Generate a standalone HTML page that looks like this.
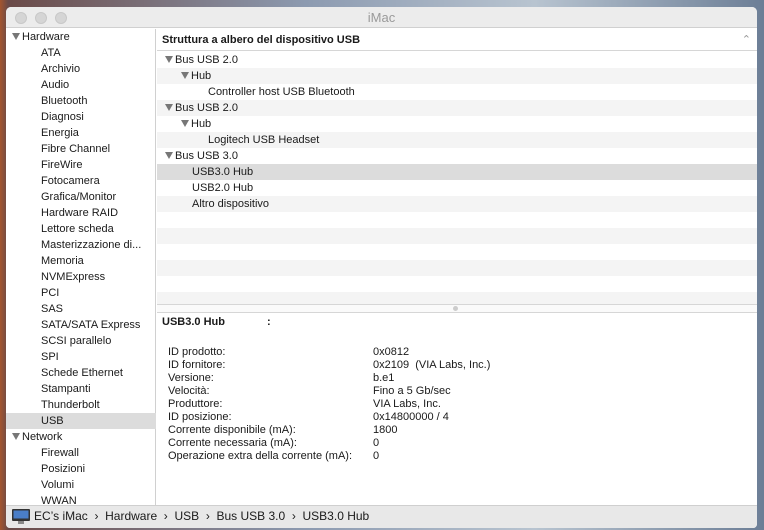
<!DOCTYPE html>
<html><head><meta charset="utf-8"><style>
*{margin:0;padding:0;box-sizing:border-box}
body{width:764px;height:530px;overflow:hidden;font-family:"Liberation Sans",sans-serif;font-size:11px;color:#1a1a1a;background:linear-gradient(90deg,#a4552e 0,#6a4a48 8px,#8c9ab0 40%,#b8c4d0 70%,#6c7e96 100%);position:relative}
.win{position:absolute;left:6px;top:7px;width:751px;height:521px;background:#fff;border-radius:5px 5px 4px 4px;overflow:hidden}
.title{height:21px;background:#ececec;border-bottom:1px solid #d0d0d0;text-align:center;line-height:21px;font-size:13px;color:#9a9a9a;position:relative}
.dot{position:absolute;top:5px;width:12px;height:12px;border-radius:50%;background:#d5d5d5;border:1px solid #c8c8c8}
.side{position:absolute;left:0;top:22px;width:150px;height:476px;background:#fff;border-right:1px solid #d0d0d0}
.r{position:absolute;left:0;width:150px;height:16px;line-height:17px;font-size:11px}
.tri{display:inline-block;width:0;height:0;border-left:4px solid transparent;border-right:4px solid transparent;border-top:7px solid #777;margin-right:2px;vertical-align:0px}
.main{position:absolute;left:151px;top:22px;width:600px;height:476px}
.hdr{height:22px;border-bottom:1px solid #d6d6d6;line-height:22px;padding-left:5px;font-weight:bold;font-size:11px;background:#fff;position:relative}
.tr{position:absolute;left:0;width:600px;height:16px;line-height:16px}
.g{background:#f4f4f4}
.sel{background:#dcdcdc}
.split{position:absolute;left:0;top:275px;width:600px;height:9px;border-top:1px solid #d6d6d6;border-bottom:1px solid #d6d6d6;background:#fafafa}
.det{position:absolute;top:284px;left:0;width:600px}
.k{position:absolute;left:11px}
.v{position:absolute;left:216px}
.status{position:absolute;left:0;top:498px;width:751px;height:23px;background:#e8e8e8;border-top:1px solid #cfcfcf;line-height:20px;font-size:12px;padding-left:28px}
</style></head><body>
<div class="win">
<div class="title"><span class="dot" style="left:9px"></span><span class="dot" style="left:29px"></span><span class="dot" style="left:49px"></span>iMac</div>
<div class="side">
<div class="r" style="top:0;left:6px"><span class="tri"></span>Hardware</div>
<div class="r" style="top:16px;padding-left:35px">ATA</div>
<div class="r" style="top:32px;padding-left:35px">Archivio</div>
<div class="r" style="top:48px;padding-left:35px">Audio</div>
<div class="r" style="top:64px;padding-left:35px">Bluetooth</div>
<div class="r" style="top:80px;padding-left:35px">Diagnosi</div>
<div class="r" style="top:96px;padding-left:35px">Energia</div>
<div class="r" style="top:112px;padding-left:35px">Fibre Channel</div>
<div class="r" style="top:128px;padding-left:35px">FireWire</div>
<div class="r" style="top:144px;padding-left:35px">Fotocamera</div>
<div class="r" style="top:160px;padding-left:35px">Grafica/Monitor</div>
<div class="r" style="top:176px;padding-left:35px">Hardware RAID</div>
<div class="r" style="top:192px;padding-left:35px">Lettore scheda</div>
<div class="r" style="top:208px;padding-left:35px">Masterizzazione di...</div>
<div class="r" style="top:224px;padding-left:35px">Memoria</div>
<div class="r" style="top:240px;padding-left:35px">NVMExpress</div>
<div class="r" style="top:256px;padding-left:35px">PCI</div>
<div class="r" style="top:272px;padding-left:35px">SAS</div>
<div class="r" style="top:288px;padding-left:35px">SATA/SATA Express</div>
<div class="r" style="top:304px;padding-left:35px">SCSI parallelo</div>
<div class="r" style="top:320px;padding-left:35px">SPI</div>
<div class="r" style="top:336px;padding-left:35px">Schede Ethernet</div>
<div class="r" style="top:352px;padding-left:35px">Stampanti</div>
<div class="r" style="top:368px;padding-left:35px">Thunderbolt</div>
<div class="r sel" style="top:384px;padding-left:35px">USB</div>
<div class="r" style="top:400px;left:6px"><span class="tri"></span>Network</div>
<div class="r" style="top:416px;padding-left:35px">Firewall</div>
<div class="r" style="top:432px;padding-left:35px">Posizioni</div>
<div class="r" style="top:448px;padding-left:35px">Volumi</div>
<div class="r" style="top:464px;padding-left:35px">WWAN</div>
</div>
<div class="main">
<div class="hdr">Struttura a albero del dispositivo USB<span style="position:absolute;right:6px;top:0;color:#999;font-weight:normal">&#8963;</span></div>
<div class="tr" style="top:23px;padding-left:8px"><span class="tri"></span>Bus USB 2.0</div>
<div class="tr g" style="top:39px;padding-left:24px"><span class="tri"></span>Hub</div>
<div class="tr" style="top:55px;padding-left:51px">Controller host USB Bluetooth</div>
<div class="tr g" style="top:71px;padding-left:8px"><span class="tri"></span>Bus USB 2.0</div>
<div class="tr" style="top:87px;padding-left:24px"><span class="tri"></span>Hub</div>
<div class="tr g" style="top:103px;padding-left:51px">Logitech USB Headset</div>
<div class="tr" style="top:119px;padding-left:8px"><span class="tri"></span>Bus USB 3.0</div>
<div class="tr sel" style="top:135px;padding-left:35px">USB3.0 Hub</div>
<div class="tr" style="top:151px;padding-left:35px">USB2.0 Hub</div>
<div class="tr g" style="top:167px;padding-left:35px">Altro dispositivo</div>
<div class="tr" style="top:183px"></div>
<div class="tr g" style="top:199px"></div>
<div class="tr" style="top:215px"></div>
<div class="tr g" style="top:231px"></div>
<div class="tr" style="top:247px"></div>
<div class="tr g" style="top:263px;height:12px"></div>
<div class="split"><span style="position:absolute;left:296px;top:1px;width:5px;height:5px;border-radius:50%;background:#ccc"></span></div>
<div class="det">
<div style="position:absolute;left:5px;top:3px;font-weight:bold">USB3.0 Hub</div>
<div style="position:absolute;left:110px;top:3px;font-weight:bold">:</div>
<div style="position:absolute;top:33px;width:600px;line-height:13px">
<div class="k" style="top:0">ID prodotto:</div><div class="v" style="top:0">0x0812</div>
<div class="k" style="top:13px">ID fornitore:</div><div class="v" style="top:13px">0x2109 &nbsp;(VIA Labs, Inc.)</div>
<div class="k" style="top:26px">Versione:</div><div class="v" style="top:26px">b.e1</div>
<div class="k" style="top:39px">Velocità:</div><div class="v" style="top:39px">Fino a 5 Gb/sec</div>
<div class="k" style="top:52px">Produttore:</div><div class="v" style="top:52px">VIA Labs, Inc.</div>
<div class="k" style="top:65px">ID posizione:</div><div class="v" style="top:65px">0x14800000 / 4</div>
<div class="k" style="top:78px">Corrente disponibile (mA):</div><div class="v" style="top:78px">1800</div>
<div class="k" style="top:91px">Corrente necessaria (mA):</div><div class="v" style="top:91px">0</div>
<div class="k" style="top:104px">Operazione extra della corrente (mA):</div><div class="v" style="top:104px">0</div>
</div>
</div>
</div>
<div class="status">
<svg style="position:absolute;left:6px;top:3px" width="18" height="16" viewBox="0 0 18 16"><rect x="0" y="0" width="18" height="12" rx="1" fill="#333"/><rect x="1.5" y="1.5" width="15" height="8" fill="#4a7ec8"/><rect x="6" y="12" width="6" height="3" fill="#888"/></svg>
EC’s iMac &nbsp;›&nbsp; Hardware &nbsp;›&nbsp; USB &nbsp;›&nbsp; Bus USB 3.0 &nbsp;›&nbsp; USB3.0 Hub</div>
</div>
</body></html>
